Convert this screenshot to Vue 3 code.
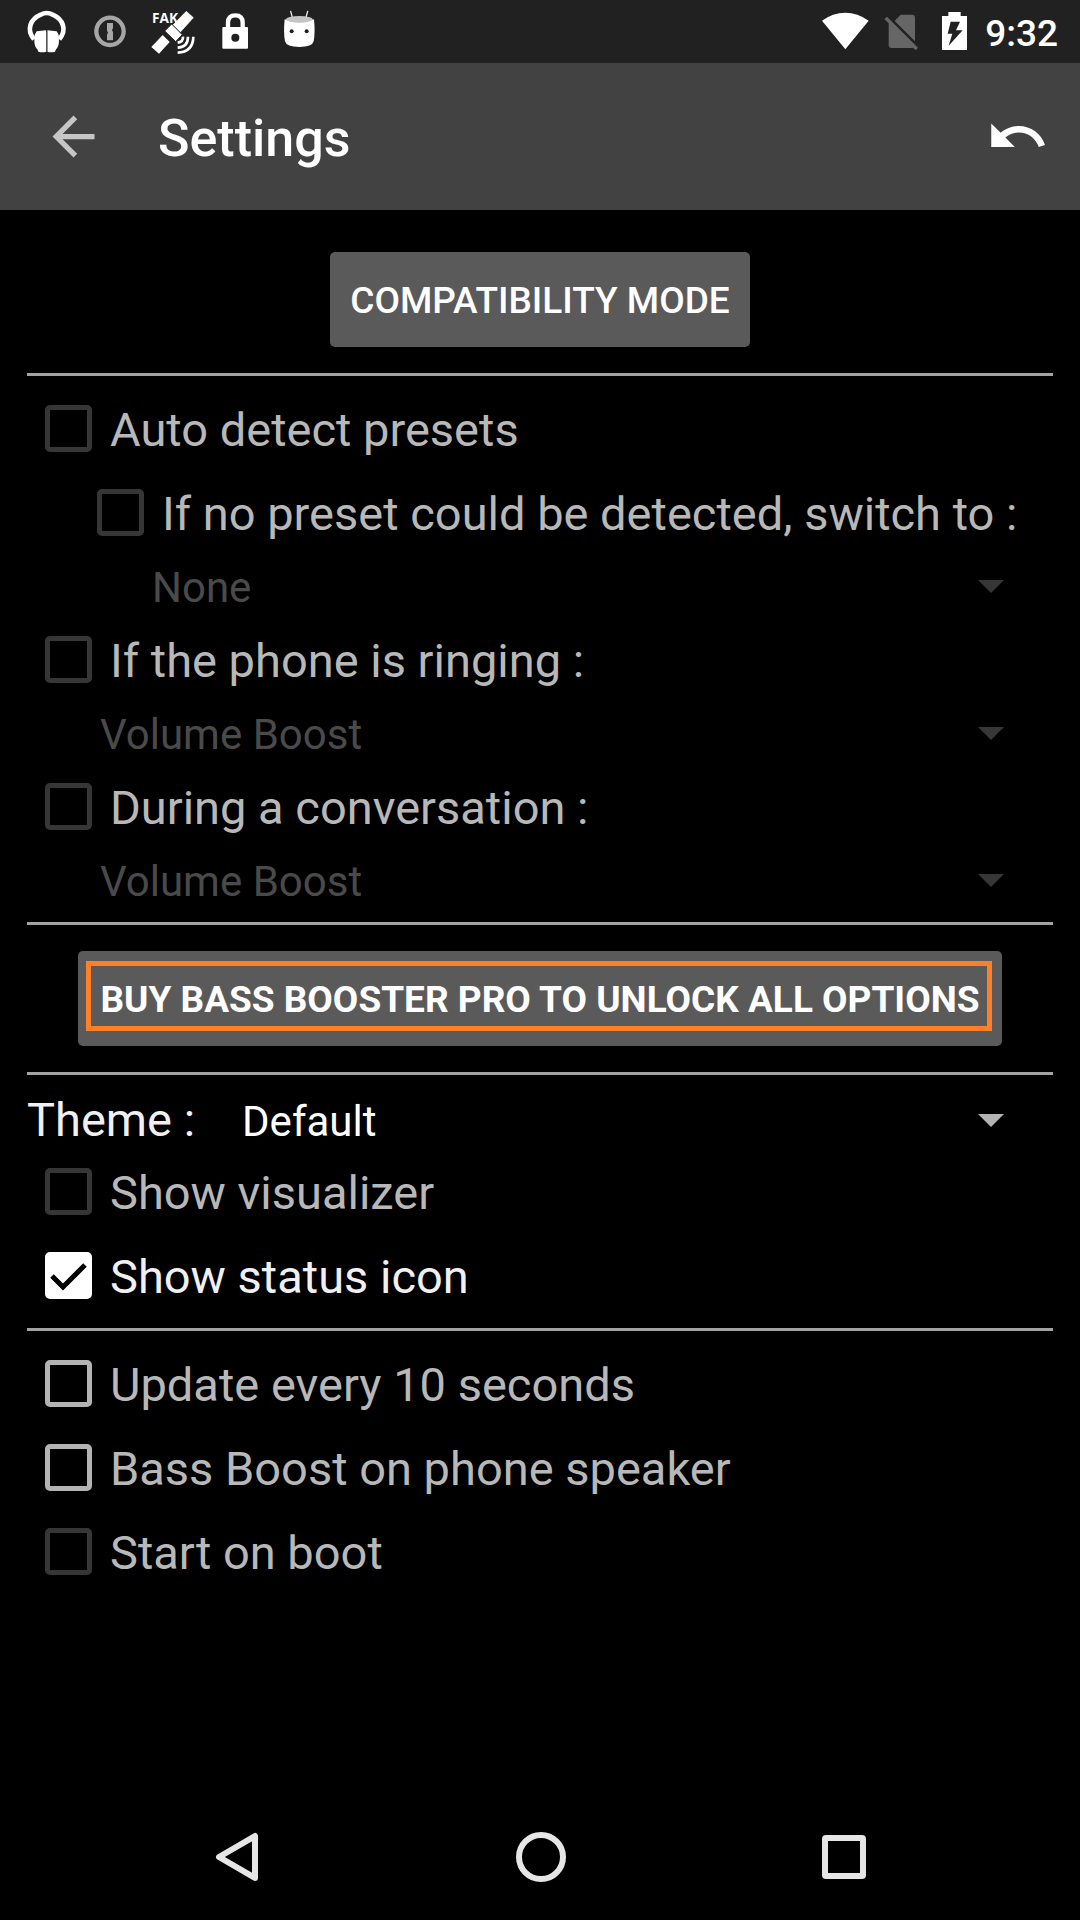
<script setup>
import { reactive, ref } from 'vue'

const detection = reactive([
  { id: 'auto', label: 'Auto detect presets', nested: false },
  { id: 'fallback', label: 'If no preset could be detected, switch to :', nested: true, preset: 'None' },
  { id: 'ringing', label: 'If the phone is ringing :', nested: false, preset: 'Volume Boost' },
  { id: 'talking', label: 'During a conversation :', nested: false, preset: 'Volume Boost' },
])

const display = reactive([
  { id: 'visualizer', label: 'Show visualizer', checked: false, disabled: true },
  { id: 'status', label: 'Show status icon', checked: true, disabled: false },
])

const behaviour = reactive([
  { id: 'update', label: 'Update every 10 seconds', checked: false, disabled: false },
  { id: 'speaker', label: 'Bass Boost on phone speaker', checked: false, disabled: false },
  { id: 'boot', label: 'Start on boot', checked: false, disabled: true },
])

const theme = ref('Default')
</script>

<template>
  <div class="screen">
    <div class="status-bar">
      <div class="notifications">
        <svg class="note" viewBox="48 0 189 189" aria-hidden="true">
          <path d="M102 118 C78 88 91 58 122 44 Q140 34 158 44 C189 58 202 88 178 118" fill="none" stroke="#fff" stroke-width="14" />
          <path d="M110 94 L138 91 V155 Q128 159 115 155 L112 148 Q104 142 103 124 L104 104 Z M170 94 L142 91 V155 Q152 159 165 155 L168 148 Q176 142 177 124 L176 104 Z" fill="#fff" />
          <path d="M140 93 V156" stroke="#555" stroke-width="4" />
        </svg>
        <svg class="note" viewBox="237 0 189 189" aria-hidden="true">
          <circle cx="330" cy="94" r="41" fill="none" stroke="#a6a6a6" stroke-width="13" />
          <path d="M321 69 H339 V84 L336 90 L339 96 V121 H321 V104 L324 98 L321 92 Z" fill="#a6a6a6" />
        </svg>
        <svg class="note" viewBox="426 0 189 189" aria-hidden="true">
          <text x="456" y="69" font-family="Open Sans, sans-serif" font-size="41" font-weight="700" fill="#fff">FAK</text>
          <path d="M559 34 L580 53 L541 96 L518 76 Z" fill="#fff" stroke="#fff" stroke-width="2" />
          <path d="M515 72 L547 104 L527 125 L494 93 Z" fill="#fff" stroke="#212121" stroke-width="3" stroke-linejoin="round" />
          <path d="M488 105 L509 126 L477 161 L454 141 Z" fill="#fff" />
          <g fill="none" stroke="#fff" stroke-width="8">
            <path d="M549 110 Q550 126 533 128" />
            <path d="M564 110 Q564 141 533 143" />
            <path d="M580 110 Q579 156 533 158" />
          </g>
        </svg>
        <svg class="note" viewBox="615 0 189 189" aria-hidden="true">
          <path d="M684 84 V68 Q684 46 706 46 Q728 46 728 68 V84" fill="none" stroke="#fff" stroke-width="13" />
          <rect x="667" y="81" width="77" height="65" rx="3" fill="#fff" />
          <circle cx="706" cy="113" r="12" fill="#212121" />
        </svg>
        <svg class="note" viewBox="804 0 189 189" aria-hidden="true">
          <path d="M872 34 L878 55 M923 34 L917 55" stroke="#eee" stroke-width="4" stroke-linecap="round" />
          <path d="M854 58 Q898 75 942 58 Q946 98 941 124 Q937 141 898 141 Q859 141 855 124 Q850 98 854 58 Z" fill="#fff" />
          <ellipse cx="898" cy="58" rx="40" ry="10" fill="#c4c4c4" />
          <circle cx="875" cy="94" r="6" fill="#212121" />
          <circle cx="920" cy="94" r="6" fill="#212121" />
        </svg>
      </div>
      <div class="system">
        <svg class="signal" viewBox="60 0 150 189" aria-hidden="true">
          <path d="M66 62 Q98 38 136 38 Q173 38 206 62 L136 148 Z" fill="#fff" />
        </svg>
        <svg class="signal" viewBox="238 0 150 189" aria-hidden="true">
          <path d="M303 44 H337 Q346 44 346 53 V124 L285 63 Z M262 50 L355 143 L348 151 L340 143 Q338 144 334 144 H276 Q267 144 267 135 V70 L254 57 Z" fill="#666" />
        </svg>
        <svg class="battery" viewBox="416 0 114 189" aria-hidden="true">
          <path d="M428 48 H447 V36 H484 V48 H503 V150 H428 Z" fill="#fff" />
          <path d="M454 65 H482 L470 91 H490 L448 137 L459 101 H445 Z" fill="#212121" />
        </svg>
        <time class="clock">9:32</time>
      </div>
    </div>

    <header class="app-bar">
      <button class="icon-button" type="button" aria-label="Back">
        <svg viewBox="0 0 24 24"><path fill="#c6c6c6" d="M20 11H7.83l5.59-5.59L12 4l-8 8 8 8 1.41-1.41L7.83 13H20v-2z" /></svg>
      </button>
      <h1>Settings</h1>
      <button class="icon-button" type="button" aria-label="Undo">
        <svg viewBox="0 0 24 24"><path fill="#fff" d="M12.5 8c-2.65 0-5.05.99-6.9 2.6L2 7v9h9l-3.62-3.62c1.39-1.16 3.16-1.88 5.12-1.88 3.54 0 6.55 2.31 7.6 5.5l2.37-.78C21.08 11.03 17.15 8 12.5 8z" /></svg>
      </button>
    </header>

    <main class="content">
      <div class="action">
        <button class="raised" type="button">COMPATIBILITY MODE</button>
      </div>
      <hr />

      <section>
        <template v-for="item in detection" :key="item.id">
          <div class="option" :class="{ nested: item.nested }">
            <input :id="item.id" type="checkbox" disabled />
            <label :for="item.id">{{ item.label }}</label>
          </div>
          <div v-if="item.preset" class="spinner indented" :class="{ nested: item.nested }">
            <select v-model="item.preset" :aria-label="item.label" disabled>
              <option>{{ item.preset }}</option>
            </select>
            <svg class="caret" viewBox="0 0 26 13" aria-hidden="true"><path d="M0 0H26L13 13Z" /></svg>
          </div>
        </template>
      </section>
      <hr />

      <div class="action">
        <button class="raised buy" type="button">
          BUY BASS BOOSTER PRO TO UNLOCK ALL OPTIONS
          <span class="highlight"></span>
        </button>
      </div>
      <hr />

      <section>
        <div class="theme">
          <label for="theme">Theme :</label>
          <div class="spinner">
            <select id="theme" v-model="theme">
              <option>Default</option>
            </select>
            <svg class="caret" viewBox="0 0 26 13" aria-hidden="true"><path d="M0 0H26L13 13Z" /></svg>
          </div>
        </div>
        <div v-for="item in display" :key="item.id" class="option">
          <input :id="item.id" v-model="item.checked" type="checkbox" :disabled="item.disabled" />
          <label :for="item.id">{{ item.label }}</label>
          <svg v-if="item.checked" class="tick" viewBox="0 0 47 47" aria-hidden="true">
            <path d="M7 24L18 35L40 13" />
          </svg>
        </div>
      </section>
      <hr />

      <section>
        <div v-for="item in behaviour" :key="item.id" class="option">
          <input :id="item.id" v-model="item.checked" type="checkbox" :disabled="item.disabled" />
          <label :for="item.id">{{ item.label }}</label>
        </div>
      </section>
    </main>

    <nav class="nav-bar">
      <button type="button" aria-label="Back">
        <svg viewBox="0 0 50 50"><path d="M42 4V46L6 25Z" /></svg>
      </button>
      <button type="button" aria-label="Home">
        <svg viewBox="0 0 50 50"><circle cx="25" cy="25" r="22" /></svg>
      </button>
      <button type="button" aria-label="Recent apps">
        <svg viewBox="0 0 50 50"><rect x="6" y="6" width="38" height="38" rx="1" /></svg>
      </button>
    </nav>
  </div>
</template>

<style>
body {
  margin: 0;
  background: #000;
}
</style>

<style scoped>
.screen {
  display: flex;
  flex-direction: column;
  min-height: 100vh;
  background: #000;
  color: #fff;
  font-family: Roboto, sans-serif;
}

button {
  padding: 0;
  border: 0;
  background: none;
  color: inherit;
  font: inherit;
}

svg {
  display: block;
}

.status-bar {
  display: flex;
  justify-content: space-between;
  height: 63px;
  padding: 0 22px 0 16px;
  background: #212121;
}

.notifications {
  display: flex;
}

.note {
  width: 63px;
  height: 63px;
}

.system {
  display: flex;
  align-items: center;
  gap: 9px;
}

.signal {
  width: 50px;
  height: 63px;
}

.battery {
  width: 38px;
  height: 63px;
}

.clock {
  padding-top: 3px;
  font-size: 37px;
  font-weight: 500;
}

.app-bar {
  display: flex;
  align-items: center;
  height: 147px;
  padding: 0 31px 0 42px;
  background: #424242;
}

.app-bar h1 {
  flex: 1;
  margin: 0;
  padding: 4px 0 0 53px;
  font-size: 52px;
  font-weight: 500;
}

.icon-button svg {
  width: 63px;
  height: 63px;
}

.content {
  padding: 26px 27px 0;
}

hr {
  height: 3px;
  margin: 11px 0 10px;
  border: 0;
  background: #a2a2a2;
}

.action {
  display: flex;
  justify-content: center;
  padding: 16px 0 15px;
}

.raised {
  position: relative;
  height: 95px;
  padding: 2px 20px 0;
  border-radius: 5px;
  background: #5a5a5b;
  font-size: 37px;
  font-weight: 500;
  white-space: nowrap;
}

.buy {
  padding: 2px 22px 0;
  font-weight: 700;
}

.highlight {
  position: absolute;
  inset: 10px 10px 15px 8px;
  border: 5px solid #ff8026;
}

.option {
  position: relative;
  display: flex;
  align-items: center;
  gap: 18px;
  height: 84px;
  padding-left: 18px;
}

.option.nested {
  padding-left: 70px;
}

.option label {
  padding-top: 2px;
  color: #b8b8b8;
  font-size: 47px;
  white-space: nowrap;
}

input {
  flex: none;
  width: 47px;
  height: 47px;
  margin: 0;
  border: 5px solid #b3b3b3;
  border-radius: 5px;
  appearance: none;
}

input:disabled {
  border-color: #363636;
}

input:checked {
  border-color: #fff;
  background: #fff;
}

input:checked + label {
  color: #f0f0f0;
}

.tick {
  position: absolute;
  left: 18px;
  width: 47px;
  height: 47px;
  fill: none;
  stroke: #000;
  stroke-width: 5;
  pointer-events: none;
}

.spinner {
  position: relative;
  display: flex;
  flex: 1;
  align-items: center;
  height: 63px;
}

.spinner.indented {
  padding-left: 73px;
}

.spinner.nested {
  padding-left: 125px;
}

select {
  flex: 1;
  height: 63px;
  padding: 4px 0 0;
  border: 0;
  background: none;
  color: #fff;
  font-family: inherit;
  font-size: 42px;
  appearance: none;
}

select:disabled {
  color: #4a4a4a;
  opacity: 1;
}

.caret {
  position: absolute;
  top: 26px;
  right: 49px;
  width: 26px;
  height: 13px;
  fill: #b3b3b3;
  pointer-events: none;
}

select:disabled + .caret {
  fill: #363636;
}

.theme {
  display: flex;
  align-items: center;
  gap: 47px;
  height: 59px;
  padding-top: 5px;
}

.theme label {
  color: #f0f0f0;
  font-size: 47px;
}

.nav-bar {
  display: flex;
  height: 126px;
  margin-top: auto;
  padding: 0 84px 0 86px;
}

.nav-bar button {
  display: flex;
  flex: 1;
  align-items: center;
  justify-content: center;
}

.nav-bar svg {
  width: 50px;
  height: 50px;
  fill: none;
  stroke: #e6e6e6;
  stroke-width: 6;
  stroke-linejoin: round;
}
</style>
